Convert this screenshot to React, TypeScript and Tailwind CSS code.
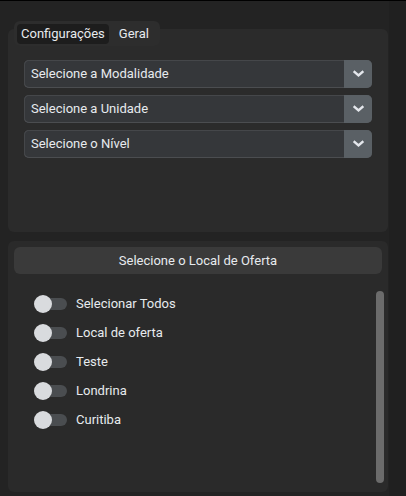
import { useState } from 'react';

const selects = ['Selecione a Modalidade', 'Selecione a Unidade', 'Selecione o Nível'];
const locais = ['Selecionar Todos', 'Local de oferta', 'Teste', 'Londrina', 'Curitiba'];

function Chevron() {
  return (
    <svg width="11" height="8" viewBox="0 0 11 8" fill="none">
      <path d="M1.5 2l4 3.5 4-3.5" stroke="#e4e7ec" strokeWidth="2.4" strokeLinecap="square" />
    </svg>
  );
}

function Toggle({ on, onClick }: { on: boolean; onClick: () => void }) {
  return (
    <button onClick={onClick} className="relative h-[18px] w-[33px] shrink-0">
      <span className={`absolute left-[11px] top-[3px] h-[12px] w-[22px] rounded-r-full ${on ? 'bg-[#3b82f6]' : 'bg-[#4a4d50]'}`} />
      <span className={`absolute top-0 h-[18px] w-[18px] rounded-full bg-[#d9dbde] ${on ? 'left-[15px]' : 'left-0'}`} />
    </button>
  );
}

export default function App() {
  const [tab, setTab] = useState<'config' | 'geral'>('config');
  const [checked, setChecked] = useState<boolean[]>(locais.map(() => false));

  return (
    <div className="flex h-[496px] w-full border-t border-black bg-[#232323] text-[13px] text-[#e7eaee] font-['Roboto','Liberation_Sans',sans-serif]">
      <div className="flex w-[389px] flex-col pl-2">
        <div className="relative mt-[28px] h-[203px] w-[380px] rounded-md bg-[#2b2b2b] px-4 pt-[31px]">
          <div className="absolute -top-2 left-[6px] flex h-[25px] items-center rounded-md bg-[#2d2d2d] px-[3px]">
            <button
              onClick={() => setTab('config')}
              className={`h-[20px] rounded px-1 leading-[20px] ${tab === 'config' ? 'bg-[#1d1d1d]' : ''}`}
            >
              Configurações
            </button>
            <button
              onClick={() => setTab('geral')}
              className={`ml-[6px] mr-1 h-[20px] rounded px-1 leading-[20px] ${tab === 'geral' ? 'bg-[#1d1d1d]' : ''}`}
            >
              Geral
            </button>
          </div>
          <div className="flex flex-col gap-[7px]">
            {selects.map(s => (
              <div key={s} className="flex h-[28px] overflow-hidden rounded-[5px] bg-[#35373a] shadow-[inset_0_-1px_0_#4b4d50,inset_1px_0_0_#45474a,inset_0_1px_0_#45474a]">
                <span className="flex-1 px-[7px] leading-[28px]">{s}</span>
                <span className="flex w-[28px] items-center justify-center bg-[#5a6065]">
                  <Chevron />
                </span>
              </div>
            ))}
          </div>
        </div>

        <div className="mt-[9px] flex h-[251px] w-[380px] flex-col rounded-md bg-[#2a2a2a] px-[6px] pt-[6px]">
          <div className="h-[27px] rounded-md bg-[#3a3a3a] text-center leading-[27px]">
            Selecione o Local de Oferta
          </div>
          <div className="mt-[17px] flex flex-1 pb-[9px]">
            <div className="-mt-[2px] flex flex-1 flex-col pl-5">
              {locais.map((l, i) => (
                <div key={l} className="flex h-[29px] items-center gap-[9px]">
                  <Toggle
                    on={checked[i]}
                    onClick={() => setChecked(c => c.map((v, j) => (j === i ? !v : v)))}
                  />
                  <span>{l}</span>
                </div>
              ))}
            </div>
            <div className="-mr-[2px] w-[8px] rounded-full bg-[#6b6b6b]" />
          </div>
        </div>
      </div>
      <div className="flex-1 bg-[#202020]" />
    </div>
  );
}
